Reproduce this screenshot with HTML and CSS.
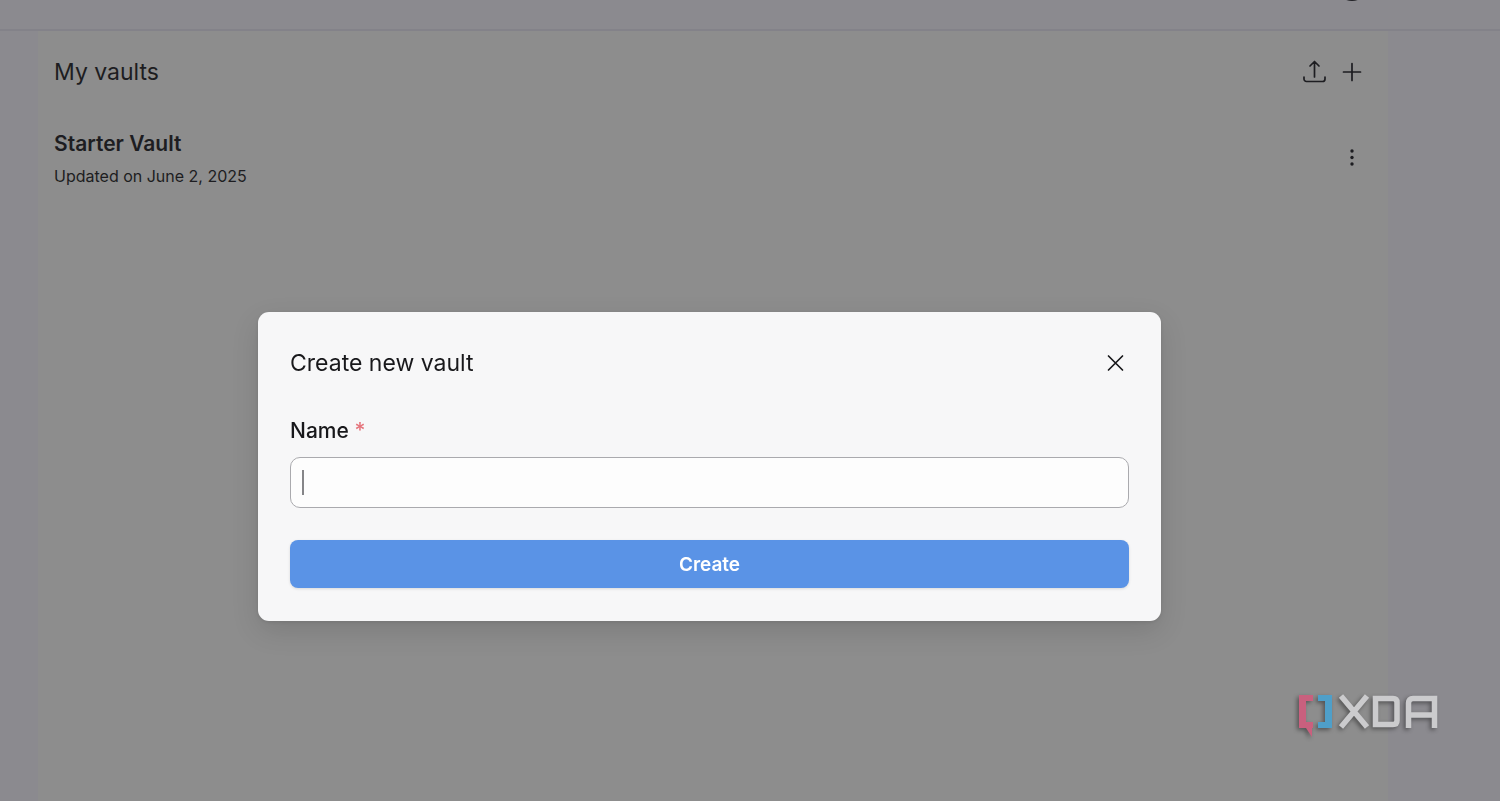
FILE: index.html
```html
<!DOCTYPE html>
<html lang="en">
<head>
<meta charset="utf-8">
<meta name="viewport" content="width=device-width, initial-scale=1">
<title>My vaults</title>
<link rel="stylesheet" href="styles.css">
</head>
<body>
<header class="topbar"><span class="avatar"></span></header>
<main class="panel">
  <div class="panel-head">
    <h1 class="title">My vaults</h1>
    <div class="actions">
      <button class="icon-btn" type="button" aria-label="Import vault">
        <svg width="24" height="24" viewBox="0 0 24 24"><path d="M12.500 17V2M8 6L12.500 1.500 17 6M2 17v2a2.500 2.500 0 0 0 2.500 2.500h16A2.500 2.500 0 0 0 23 19v-2"/></svg>
      </button>
      <button class="icon-btn" type="button" aria-label="New vault">
        <svg width="24" height="24" viewBox="0 0 24 24"><path d="M12 3.500v17M3.500 12h17"/></svg>
      </button>
    </div>
  </div>
  <article class="vault">
    <div>
      <h2 class="vault-name">Starter Vault</h2>
      <p class="vault-date">Updated on June 2, 2025</p>
    </div>
    <button class="icon-btn" type="button" aria-label="Vault options">
      <svg class="dots" width="24" height="24" viewBox="0 0 24 24"><circle cx="12" cy="5" r="1.700"/><circle cx="12" cy="11.500" r="1.700"/><circle cx="12" cy="18" r="1.700"/></svg>
    </button>
  </article>
</main>

<div class="overlay">
  <dialog class="dialog" open aria-labelledby="dialog-title">
    <div class="dialog-head">
      <h2 class="title" id="dialog-title">Create new vault</h2>
      <button class="icon-btn" type="button" aria-label="Close">
        <svg width="24" height="24" viewBox="0 0 24 24"><path d="M5.500 5l14 14M19.500 5l-14 14"/></svg>
      </button>
    </div>
    <form class="form">
      <label class="label" for="name">Name <span class="required">*</span></label>
      <div class="field">
        <input class="input" id="name" type="text" required>
        <span class="caret"></span>
      </div>
      <button class="submit" type="button">Create</button>
    </form>
  </dialog>
</div>

<svg class="brand" width="160" height="60" viewBox="0 0 160 60" role="img" aria-label="XDA">
  <path fill="#c9607e" d="M9 7h14v6h-7v21h7v6h-1v9l-6-9H9z"/>
  <path fill="#4f9fc9" d="M28 7h14v33H28v-6h7V13h-7z"/>
  <g fill="none" stroke="#cbcbcd" stroke-width="5.500">
    <path d="M51 8l26 31M77 8L51 39"/>
    <path d="M85.500 10.500H103q4 0 4 4v18q0 4-4 4H85.500z"/>
    <path d="M118.500 40V15q0-4.500 4.500-4.500h21.500V40M118.500 27h26"/>
  </g>
</svg>
</body>
</html>
```

FILE: styles.css
```css
* { box-sizing: border-box; }

body {
  margin: 0;
  min-height: 100vh;
  display: flex;
  flex-direction: column;
  background: #8b8a8f;
  color: #1d1d21;
  font-family: Inter, "Liberation Sans", sans-serif;
}

h1, h2, p { margin: 0; }

.topbar {
  position: relative;
  height: 31px;
  border-bottom: 2px solid #838289;
  overflow: hidden;
}

.avatar {
  position: absolute;
  right: 132px;
  bottom: 28px;
  width: 32px;
  height: 32px;
  border-radius: 50%;
  background: #222226;
}

.panel {
  flex: 1;
  margin: 0 112px 0 38px;
  padding: 25px 24px 24px 16px;
  background: #8d8d8d;
}

.panel-head, .vault, .dialog-head {
  display: flex;
  align-items: center;
  justify-content: space-between;
}

.title {
  font-size: 23px;
  line-height: 32px;
  font-weight: 400;
}

.actions { display: flex; gap: 14px; }

.icon-btn {
  display: flex;
  padding: 0;
  border: 0;
  background: none;
  color: inherit;
}

.icon-btn svg {
  fill: none;
  stroke: currentColor;
  stroke-width: 1.7;
  stroke-linecap: round;
  stroke-linejoin: round;
}

.icon-btn .dots { fill: currentColor; stroke: none; }

.vault { margin-top: 40px; }

.vault-name {
  font-size: 21px;
  line-height: 32px;
  font-weight: 600;
}

.vault-date {
  margin-top: 4px;
  font-size: 16px;
  line-height: 24px;
}

.overlay {
  position: fixed;
  inset: 0;
  display: flex;
  align-items: center;
  justify-content: center;
  padding: 132px 81px 0 0;
}

.dialog {
  position: static;
  width: 100%;
  max-width: 903px;
  margin: 0;
  padding: 31px 32px 33px;
  border: 0;
  border-radius: 11px;
  background: #f7f7f8;
  color: #18181b;
  box-shadow: 0 10px 28px rgba(0, 0, 0, 0.12), 0 1px 4px rgba(0, 0, 0, 0.1);
}

.dialog-head { padding: 4px 2px 4px 0; }

.form {
  display: flex;
  flex-direction: column;
  margin-top: 32px;
}

.label {
  font-size: 21px;
  line-height: 32px;
  font-weight: 500;
}

.required { color: #e5737b; }

.field {
  position: relative;
  margin: 10px 0 32px;
}

.input {
  display: block;
  width: 100%;
  height: 51px;
  padding: 0 12px;
  border: 1px solid #aaaaae;
  border-radius: 10px;
  outline: 0;
  background: #fdfdfd;
  font: inherit;
  font-size: 22px;
}

.caret {
  position: absolute;
  top: 13px;
  left: 12px;
  width: 2px;
  height: 25px;
  background: #858588;
}

.submit {
  height: 48px;
  border: 0;
  border-radius: 8px;
  background: #5a93e6;
  color: #fff;
  font: inherit;
  font-size: 19px;
  font-weight: 600;
  box-shadow: 0 1px 3px rgba(0, 0, 0, 0.12);
}

.brand {
  position: fixed;
  right: 50px;
  bottom: 53px;
  filter: drop-shadow(-2px 2px 2px rgba(0, 0, 0, 0.4));
}
```
